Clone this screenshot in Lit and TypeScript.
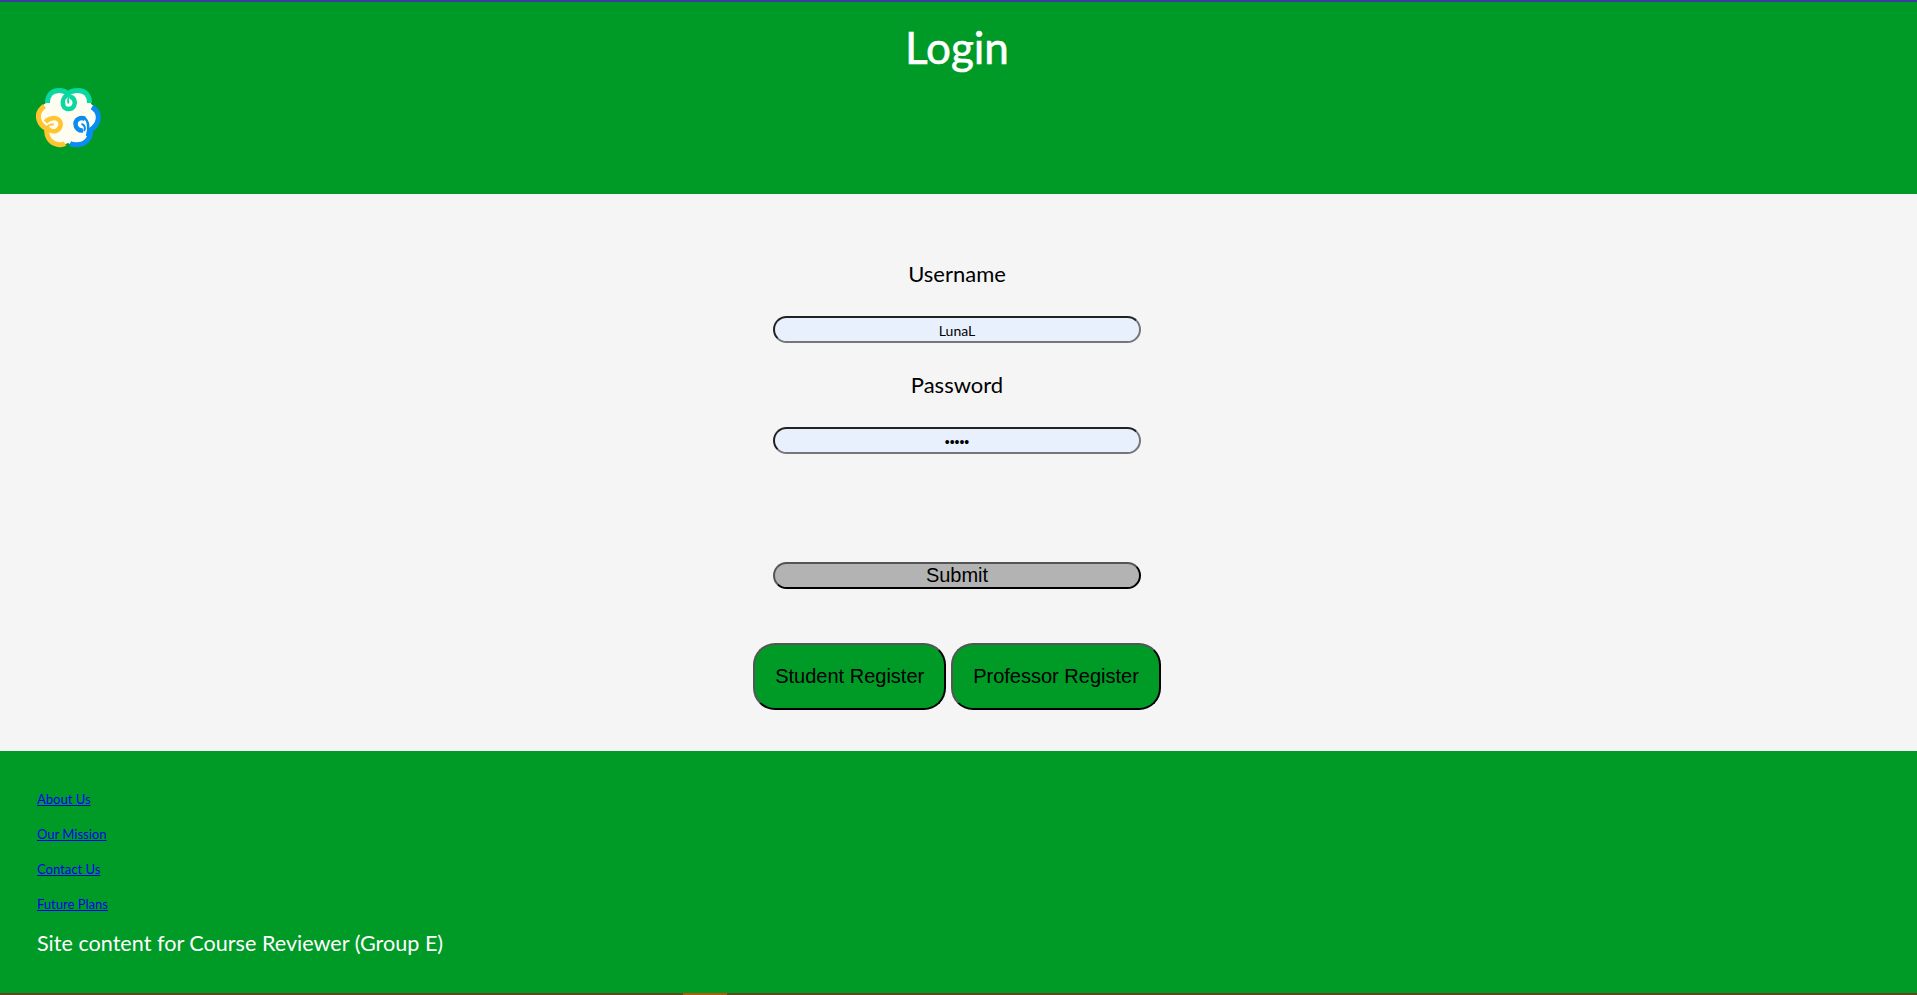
import { LitElement, html, css } from "lit";
import { customElement } from "lit/decorators.js";

@customElement("app-root")
export class AppRoot extends LitElement {
  static styles = css`
    :host { display: block; font-family: "Lato", "Noto Sans", sans-serif; color: #000; }
    .page { display: flex; flex-direction: column; height: 995px; overflow: hidden; }
    header { background: #009a27; border-top: 2px solid #3a3f9e; height: 192px; padding: 0 37px; box-sizing: content-box; flex: none; display: flex; flex-direction: column; }
    h1 { margin: 0 -34px 0 -37px; padding-top: 22px; height: 84px; box-sizing: border-box; line-height: 46px; font-size: 44px; font-weight: 400; -webkit-text-stroke: 0.6px #fff; color: #fff; text-align: center; }
    .logo { display: block; width: 66px; height: 62px; margin-left: -1px; }
    main { flex: none; height: 557px; background: #f5f5f5; display: flex; flex-direction: column; align-items: center; box-sizing: border-box; padding: 60px 3px 0 0; }
    label { display: block; font-size: 22px; line-height: 40px; height: 40px; text-align: center; }
    .field { width: 368px; height: 27px; box-sizing: border-box; border-radius: 14px; border: 2px solid; border-color: #222 #767676 #767676 #222; background: #e8f0fe; text-align: center; font: 14px/25px "Lato", sans-serif; padding: 2px 2px 0; margin: 22px 0; outline: none; color: #000; display: block; }
    .pw { font-family: "Liberation Sans", Arial, sans-serif; }
    .submit { width: 368px; height: 27px; box-sizing: border-box; border-radius: 14px; border: 2px solid; border-color: #555 #000 #000 #555; background: #b3b3b3; font: 20px/23px "Liberation Sans", Arial, sans-serif; padding: 0; margin-top: 86px; color: #000; display: block; }
    .regs { display: flex; gap: 5px; margin-top: 54px; }
    .reg { height: 67px; box-sizing: border-box; border-radius: 22px; border: 2px solid; border-color: #555 #000 #000 #555; background: #009a27; font: 20px "Liberation Sans", Arial, sans-serif; padding: 0 20px; color: #000; }
    footer { flex: 1; background: #009a27; padding: 40px 37px 0; display: flex; flex-direction: column; color: #fff; }
    footer a { display: block; width: fit-content; color: #0000ee; font-size: 13px; line-height: 17px; margin-bottom: 18px; text-decoration: underline; }
    footer p { margin: -3px 0 0; font-size: 21.600px; line-height: 30px; }
    .strip { flex: none; height: 2px; display: flex; background: #5c4a1c; }
    .strip i { display: block; width: 44px; height: 2px; margin-left: 683px; background: #b05a10; }
  `;

  render() {
    return html`<div class="page">
      <header>
        <h1>Login</h1>
        <svg class="logo" viewBox="36 86 66 62" fill="none" stroke-width="5" stroke-linecap="butt">
          <path fill="#fffdf2" stroke="none" d="M46 103C46 95 52 90 59 90C63 90 66 91 68 93C70 91 74 90 78 90C85 90 91 95 91 104C96 107 100 112 98 120C97 125 94 128 90 131C91 138 86 144 79 145C75 145 71 145 68 143C64 145 60 145 57 144C50 142 46 136 47 129C42 127 39 123 38 118C37 112 40 107 46 103Z"/>
          <path stroke="#0bd8a0" d="M47.500 103C47.500 95 52 90.500 59 90.500C63 90.500 66 91.500 68 94C70 91.500 73 90.500 78 90.500C85 90.500 89.500 95 89.500 103"/>
          <path stroke="#0bd8a0" stroke-width="4.500" d="M70 93C64 96 61.500 101 63.500 106C65 110 72 110 74 106C76 102 74 97 70 97"/>
          <path stroke="#0bd8a0" stroke-width="1.800" d="M70.500 96.500C68 97.500 67.500 100 68.500 103.500"/>
          <path stroke="#ffc531" d="M44.500 106C39 110 37.500 115 39 120C40.500 125 43 127 47 129C45.500 136 50 143 58 144.500C61 145 63.500 144.500 65 143.500"/>
          <path stroke="#ffc531" stroke-width="4.500" d="M45.500 122C49 117.500 56 117 59 120C62 123 61 129 56 131C52 132 48 130 47 127"/>
          <path stroke="#ffc531" stroke-width="1.800" d="M46.500 127.500C48.500 124.500 51 124 54 124.500"/>
          <path stroke="#0a8cf0" d="M92 107C97 110 99 115 98 120C97 125 93.500 128 90.500 130C91.500 137 86 144 79 144.500C75 145 72 144.500 70 143.500"/>
          <path stroke="#0a8cf0" stroke-width="4.500" d="M85 119C81 116.500 75.500 119 75.500 124C75.500 128 79 131 83 130.500"/>
          <path stroke="#0a8cf0" stroke-width="2.500" d="M83.500 117.500C88.500 120 89.500 128 87 136"/>
          <path stroke="#0a8cf0" stroke-width="2" d="M84 131C86 128 84.500 124.500 81.500 124"/>
        </svg>
      </header>
      <main>
        <label for="u">Username</label>
        <input id="u" class="field" type="text" .value=${"LunaL"} />
        <label for="p">Password</label>
        <input id="p" class="field pw" type="password" .value=${"Luna1"} />
        <button class="submit">Submit</button>
        <div class="regs">
          <button class="reg">Student Register</button>
          <button class="reg">Professor Register</button>
        </div>
      </main>
      <footer>
        <a href="#">About Us</a>
        <a href="#">Our Mission</a>
        <a href="#">Contact Us</a>
        <a href="#">Future Plans</a>
        <p>Site content for Course Reviewer (Group E)</p>
      </footer>
      <div class="strip"><i></i></div>
    </div>`;
  }
}
